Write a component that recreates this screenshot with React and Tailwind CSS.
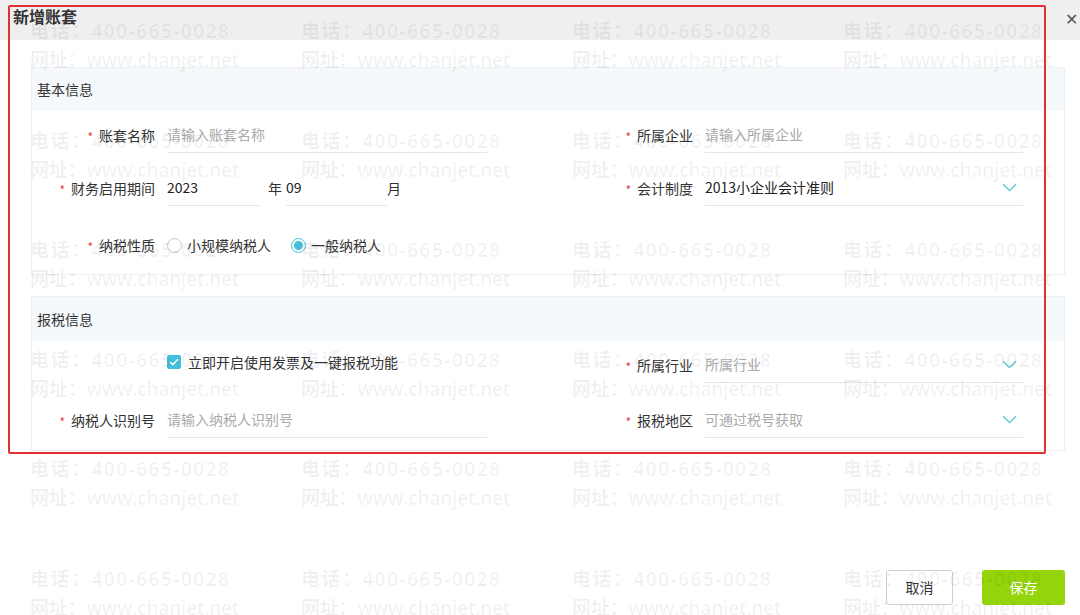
import { useState } from 'react';

const cols = [30, 301, 572, 843];
const rows = [17, 127, 236, 346, 455, 565];

// 水印
function Watermark() {
  return (
    <div className="pointer-events-none absolute inset-0 overflow-hidden font-['Open_Sans','Noto_Sans_CJK_SC',sans-serif] text-[19px] font-semibold leading-[29px] text-[rgba(0,0,0,0.06)]">
      {rows.map((y) =>
        cols.map((x) => (
          <div key={x + '-' + y} className="absolute whitespace-nowrap" style={{ left: x, top: y }}>
            <div className="tracking-[1.5px]">电话：400-665-0028</div>
            <div className="tracking-[-0.2px]">网址：www.chanjet.net</div>
          </div>
        ))
      )}
    </div>
  );
}

function Chevron() {
  return (
    <svg width="15" height="9" viewBox="0 0 15 9" className="mr-[6px] shrink-0">
      <path d="M1 1.2 L7.5 7.5 L14 1.2" fill="none" stroke="#5cc6d3" strokeWidth="1.3" />
    </svg>
  );
}

function Label({ children }) {
  return (
    <div className="flex h-[36px] w-[135px] shrink-0 items-center justify-end gap-[6px] pr-[12px]">
      <span className="pt-[3px] text-[12px] leading-none text-[#e4393c]">*</span>
      <span className="text-[14px] text-[#333]">{children}</span>
    </div>
  );
}

function Field({ label, value, placeholder, select, width = 'w-[320px]' }) {
  return (
    <div className="flex h-[36px] items-center">
      <Label>{label}</Label>
      <div className={`flex h-[36px] ${width} items-center justify-between border-b border-[#e3e6ea]`}>
        {value ? (
          <span className="text-[14px] text-[#222]">{value}</span>
        ) : (
          <span className="text-[14px] text-[#aaa]">{placeholder}</span>
        )}
        {select && <Chevron />}
      </div>
    </div>
  );
}

function Radio({ checked, children }) {
  return (
    <label className="flex items-center gap-[5px] text-[14px] text-[#333]">
      {checked ? (
        <span className="flex h-[15px] w-[15px] items-center justify-center rounded-full border border-[#45c0db] bg-white">
          <span className="h-[9px] w-[9px] rounded-full bg-[#45c0db]" />
        </span>
      ) : (
        <span className="h-[15px] w-[15px] rounded-full border border-[#c8c8c8] bg-white" />
      )}
      {children}
    </label>
  );
}

function Panel({ title, headH, children }) {
  return (
    <div className="border border-[#edf0f3]">
      <div className={`${headH} flex items-center bg-[#f5f9fb] pl-[5px] text-[14px] text-[#333]`}>{title}</div>
      {children}
    </div>
  );
}

export default function App() {
  const [kind, setKind] = useState('general');

  return (
    <div className="relative h-[615px] w-[1080px] overflow-hidden bg-white font-['Noto_Sans_CJK_SC',sans-serif]">
      {/* 标题栏 */}
      <div className="flex h-[40px] items-start justify-between bg-[#efefef] pl-[13px] pr-[2px] pt-[4px]">
        <h1 className="text-[16px] font-bold text-[#333]">新增账套</h1>
        <span className="mt-[6px] text-[16px] leading-none text-[#555]">✕</span>
      </div>

      <div className="pl-[31px] pr-[15px]">
        {/* 基本信息 */}
        <div className="mt-[27px]">
          <Panel title="基本信息" headH="h-[43px]">
            <div className="flex flex-col pb-[11px] pt-[6px]">
              <div className="flex">
                <div className="w-[538px]">
                  <Field label="账套名称" placeholder="请输入账套名称" />
                </div>
                <Field label="所属企业" placeholder="请输入所属企业" width="w-[318px]" />
              </div>
              <div className="mt-[17px] flex">
                <div className="flex h-[36px] w-[538px] items-center">
                  <Label>财务启用期间</Label>
                  <div className="flex h-[36px] w-[93px] items-center border-b border-[#e3e6ea] text-[14px] text-[#222]">2023</div>
                  <span className="pl-[8px] pr-[4px] text-[14px] text-[#333]">年</span>
                  <div className="flex h-[36px] w-[101px] items-center border-b border-[#e3e6ea] text-[14px] text-[#222]">09</div>
                  <span className="text-[14px] text-[#333]">月</span>
                </div>
                <Field label="会计制度" value="2013小企业会计准则" select width="w-[318px]" />
              </div>
              <div className="mt-[21px] flex h-[36px] items-center">
                <Label>纳税性质</Label>
                <div className="flex items-center gap-[20px]" onClick={() => setKind(kind === 'general' ? 'small' : 'general')}>
                  <Radio checked={kind === 'small'}>小规模纳税人</Radio>
                  <Radio checked={kind === 'general'}>一般纳税人</Radio>
                </div>
              </div>
            </div>
          </Panel>
        </div>

        {/* 报税信息 */}
        <div className="mt-[21px]">
          <Panel title="报税信息" headH="h-[44px]">
            <div className="flex flex-col gap-[19px] pb-[12px] pt-[6px]">
              <div className="flex">
                <div className="flex h-[30px] w-[538px] items-center pl-[135px]">
                  <span className="flex h-[14px] w-[14px] items-center justify-center rounded-[2px] bg-[#41bfdc]">
                    <svg width="10" height="8" viewBox="0 0 10 8">
                      <path d="M1 4 L3.8 6.6 L9 1.3" fill="none" stroke="#fff" strokeWidth="1.6" />
                    </svg>
                  </span>
                  <span className="ml-[7px] text-[14px] text-[#333]">立即开启使用发票及一键报税功能</span>
                </div>
                <Field label="所属行业" placeholder="所属行业" select width="w-[318px]" />
              </div>
              <div className="flex">
                <div className="w-[538px]">
                  <Field label="纳税人识别号" placeholder="请输入纳税人识别号" />
                </div>
                <Field label="报税地区" placeholder="可通过税号获取" select width="w-[318px]" />
              </div>
            </div>
          </Panel>
        </div>

        {/* 按钮 */}
        <div className="mt-[119px] flex justify-end gap-[29px]">
          <button className="h-[35px] w-[67px] rounded-[3px] border border-[#cfcfcf] bg-white text-[14px] text-[#333]">取消</button>
          <button className="h-[35px] w-[83px] rounded-[3px] bg-[#94d40b] text-[14px] text-white">保存</button>
        </div>
      </div>

      <Watermark />

      {/* 红框标注 */}
      <div className="pointer-events-none absolute left-[8px] top-[5px] h-[449px] w-[1038px] rounded-[2px] border-2 border-[#e0312e]" />
    </div>
  );
}
